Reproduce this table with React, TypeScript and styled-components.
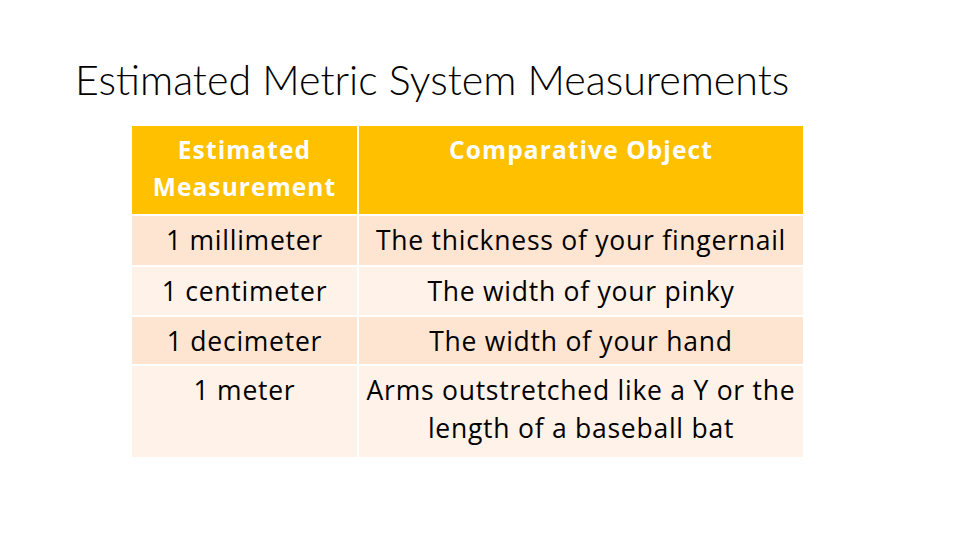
import React from 'react';
import styled, { createGlobalStyle } from 'styled-components';

const GlobalStyle = createGlobalStyle`
  html, body {
    margin: 0;
    padding: 0;
    background: #ffffff;
  }
  body {
    font-family: "Open Sans", Lato, sans-serif;
    color: #000000;
  }
`;

const Slide = styled.div`
  width: 960px;
  height: 540px;
  padding: 50px 0 0 0;
  box-sizing: border-box;
  overflow: hidden;
`;

const Title = styled.h1`
  margin: 0 0 0 75px;
  font-family: Lato, sans-serif;
  font-weight: 300;
  font-size: 41.2px;
  line-height: 58px;
  white-space: nowrap;
`;

const Table = styled.div`
  margin: 18px 0 0 132px;
  width: 671px;
  display: grid;
  grid-template-columns: 225px 444px;
  grid-template-rows: 88px 49px 48px 47px 91px;
  gap: 2px;
  background: #ffffff;
`;

const Cell = styled.div<{ $tone: 'head' | 'band' | 'plain' }>`
  background: ${(p) =>
    p.$tone === 'head' ? '#ffc000' : p.$tone === 'band' ? '#fde5d2' : '#fef2e9'};
  color: ${(p) => (p.$tone === 'head' ? '#ffffff' : '#000000')};
  font-weight: ${(p) => (p.$tone === 'head' ? 700 : 400)};
  font-size: ${(p) => (p.$tone === 'head' ? '24.5px' : '26.5px')};
  letter-spacing: ${(p) => (p.$tone === 'head' ? '1.1px' : '0.75px')};
  line-height: ${(p) => (p.$tone === 'head' ? '37px' : '38px')};
  text-align: center;
  padding: 5px 0 0;
  box-sizing: border-box;
  white-space: ${(p) => (p.$tone === 'head' ? 'nowrap' : 'normal')};
`;

const rows = [
  ['1 millimeter', 'The thickness of your fingernail'],
  ['1 centimeter', 'The width of your pinky'],
  ['1 decimeter', 'The width of your hand'],
  ['1 meter', 'Arms outstretched like a Y or the length of a baseball bat'],
];

const App: React.FC = () => {
  return (
    <>
      <GlobalStyle />
      <Slide>
        <Title>Estimated Metric System Measurements</Title>
        <Table>
          <Cell $tone="head">
            Estimated
            <br />
            Measurement
          </Cell>
          <Cell $tone="head">Comparative Object</Cell>
          {rows.map(([size, object], i) => (
            <React.Fragment key={size}>
              <Cell $tone={i % 2 === 0 ? 'band' : 'plain'}>{size}</Cell>
              <Cell $tone={i % 2 === 0 ? 'band' : 'plain'}>{object}</Cell>
            </React.Fragment>
          ))}
        </Table>
      </Slide>
    </>
  );
};

export default App;
